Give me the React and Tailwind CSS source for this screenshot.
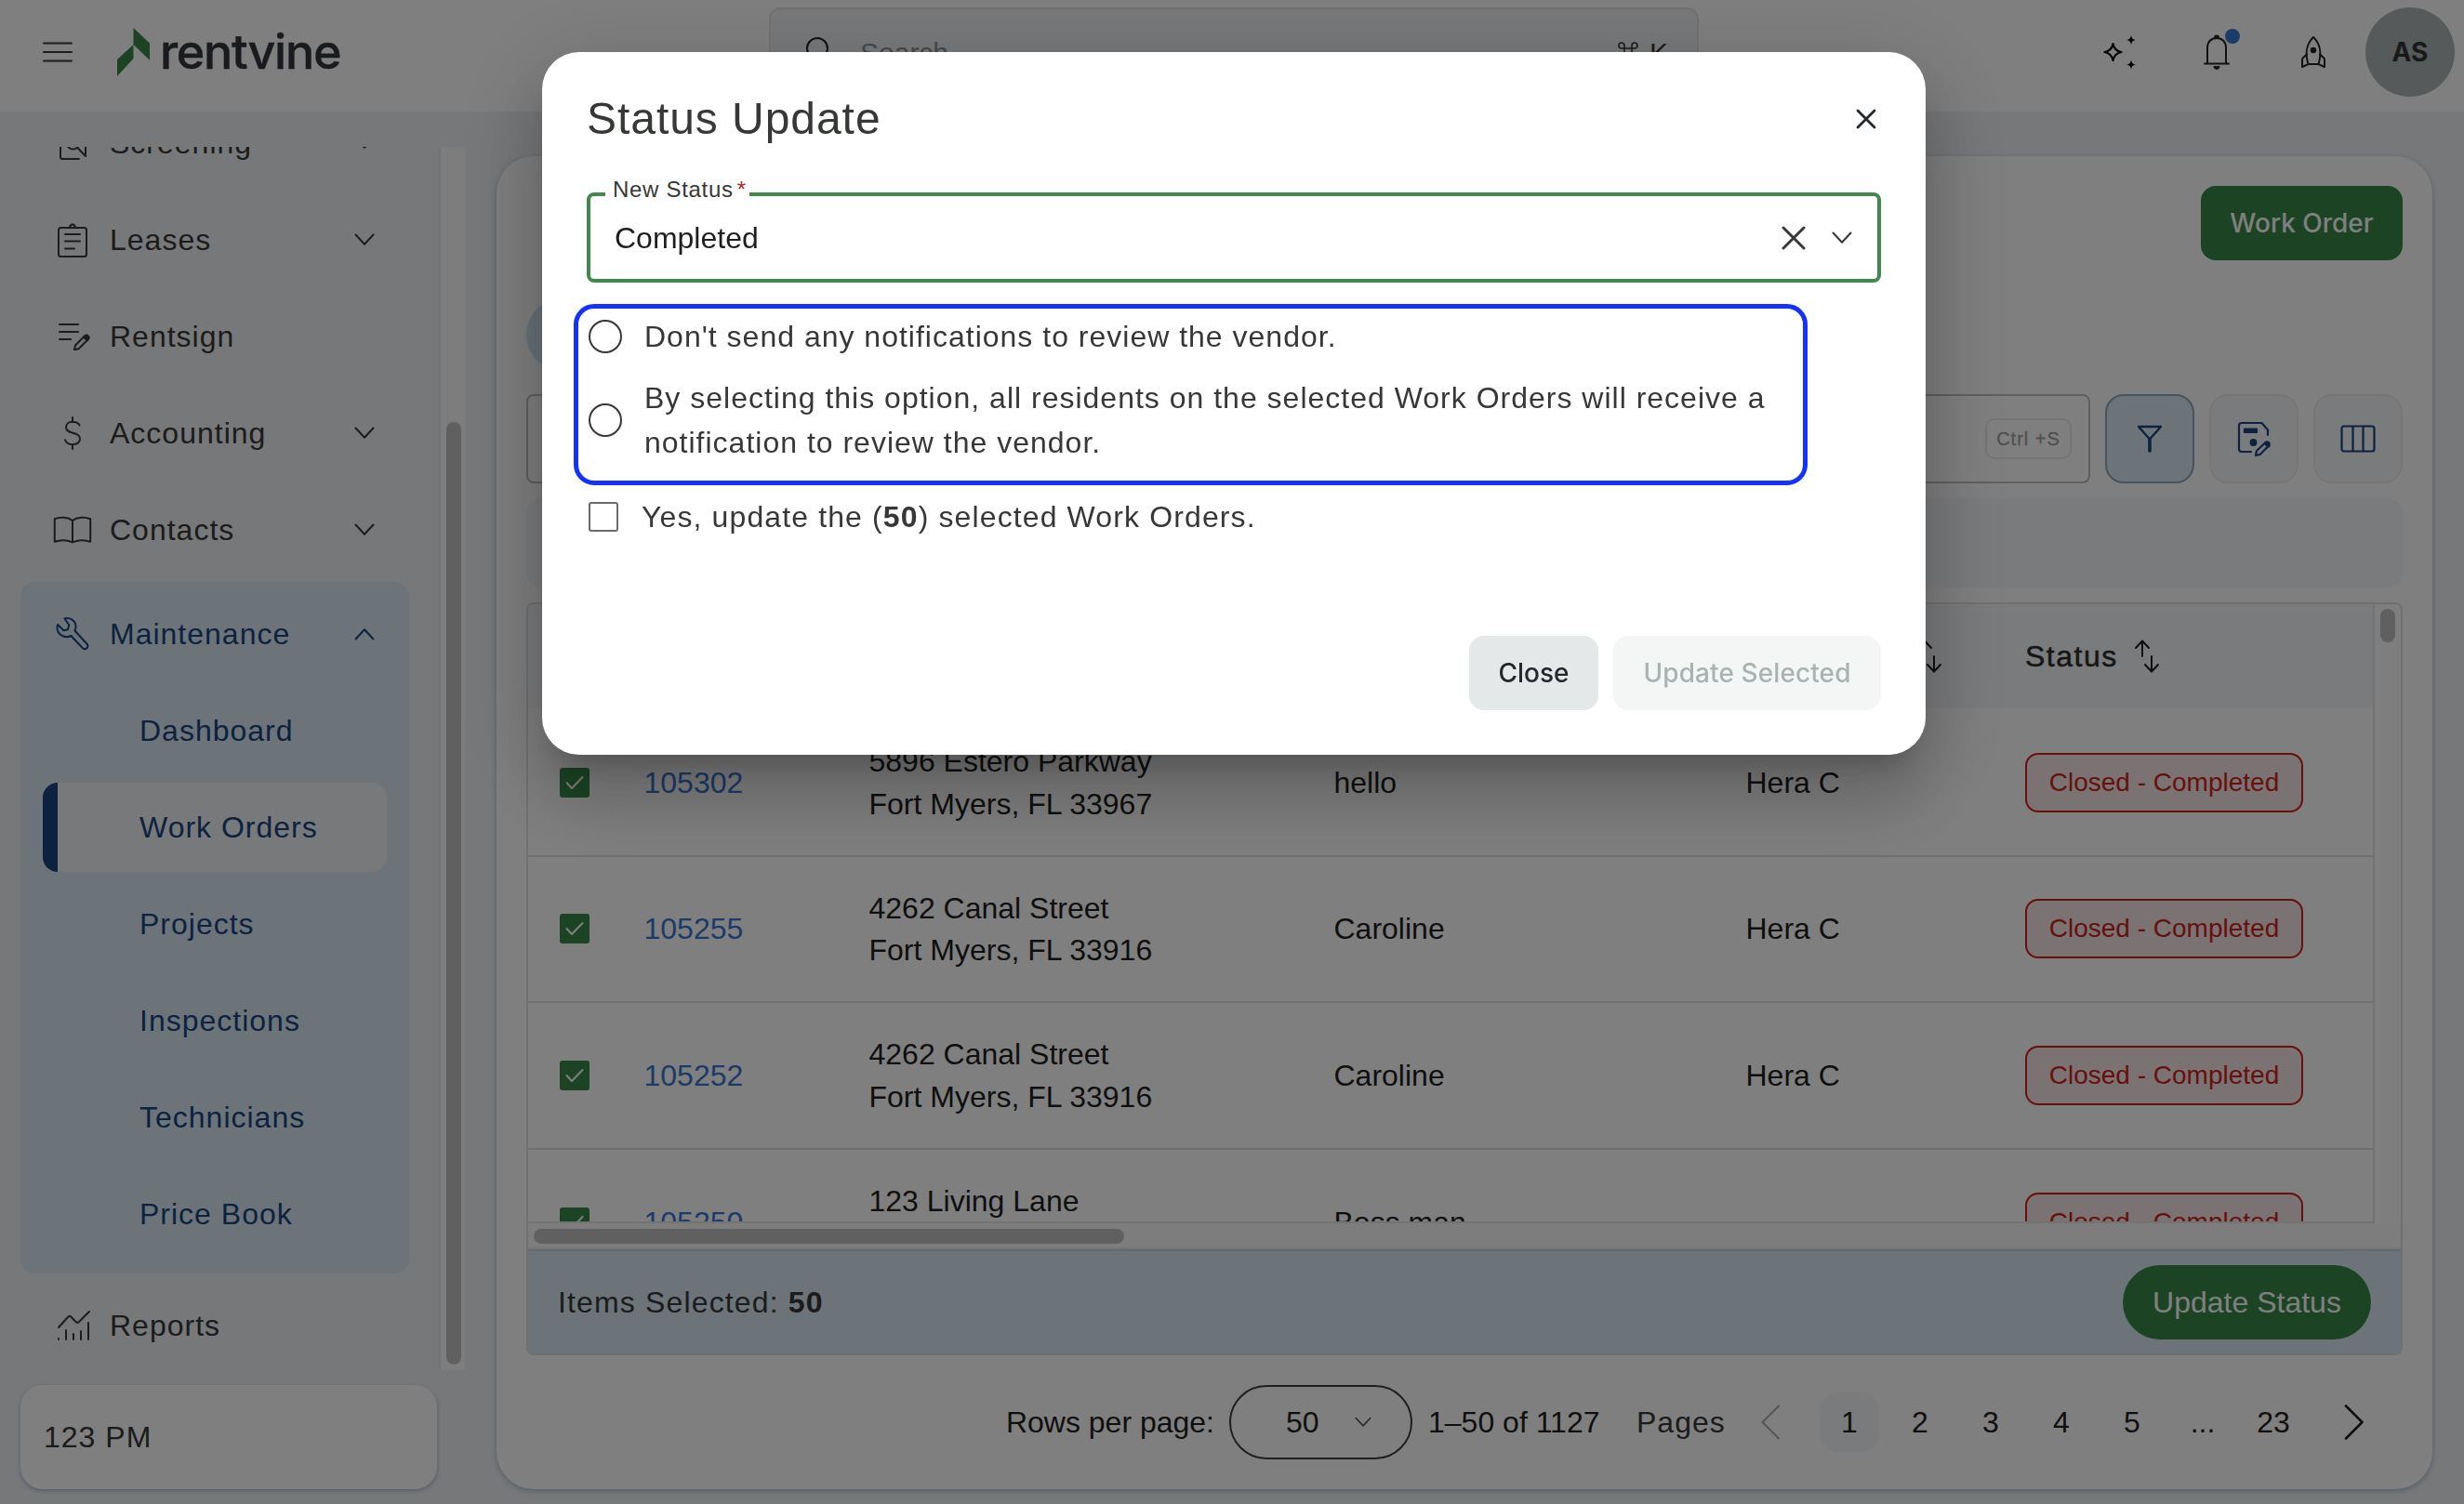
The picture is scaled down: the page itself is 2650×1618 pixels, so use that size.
import clsx from 'clsx';

const Svg = ({ w, h, sw = 2, className, children }) => (
  <svg
    width={w}
    height={h}
    viewBox={`0 0 ${w} ${h}`}
    fill="none"
    stroke="currentColor"
    strokeWidth={sw}
    strokeLinecap="round"
    strokeLinejoin="round"
    className={clsx('shrink-0', className)}
  >
    {children}
  </svg>
);

const ChevronDown = ({ className }) => (
  <Svg w={22} h={14} className={className}>
    <path d="M1.500 1.500 11 11.800l9.500-10.300" />
  </Svg>
);

const ScreeningIcon = () => (
  <Svg w={34} h={36}>
    <path d="M24 35H6.500A2.500 2.500 0 0 1 4 32.500v-27A2.500 2.500 0 0 1 6.500 3h22A2.500 2.500 0 0 1 31 5.500V32l-8.500-9" />
    <circle cx="17.500" cy="18" r="6.500" />
  </Svg>
);

const LeasesIcon = () => (
  <Svg w={34} h={38}>
    <rect x="2" y="6" width="30" height="31" rx="2.500" />
    <path d="M14 6a3 3.600 0 1 1 6 0M9 13h16M9 20.500h16M9 28.500h10" />
  </Svg>
);

const RentsignIcon = () => (
  <Svg w={36} h={32}>
    <path d="M3 3h20M3 11h20M3 19h12" />
    <path d="M20 25.500 30 15.500a2.600 2.600 0 0 1 3.700 3.700L23.500 29.200 19 30.300z" />
    <path d="m29 16.500 3.600 3.600 1.400-2-2.400-2.800z" fill="currentColor" />
  </Svg>
);

const AccountingIcon = () => (
  <Svg w={20} h={36} className="ml-[7px]">
    <path d="M10 1v5M10 30v5M17.500 9.500C16 7 13.500 5.800 10 5.800 6 5.800 3 8.200 3 11.800c0 8 15 4 15 12.300 0 3.800-3.200 6.100-8 6.100-4.100 0-7-1.900-8-4.900" />
  </Svg>
);

const ContactsIcon = () => (
  <Svg w={42} h={30} className="-ml-1">
    <path d="M21 5C16 1 8 .8 1.800 3.200v24.500C8 25.500 16 25.500 21 28.500c5-3 13-3 19.200-.8V3.200C34 .8 26 1 21 5zM21 5v23.500" />
  </Svg>
);

const MaintenanceIcon = () => (
  <Svg w={36} h={36} className="-ml-px">
    <path d="M9.500 1.500c5.500-1.700 11.700 2 12 8 .1 2-.4 3.600-1 5l13 14.200c2.600 3.300-1.400 7.300-4.600 4.600L16.500 20c-7 3.500-14.800-1.500-15-8.500 0-1.500.2-2.500.7-3.500l6.300 6.300 4.500-1 1.300-4.800z" />
  </Svg>
);

const ReportsIcon = () => (
  <Svg w={36} h={34}>
    <path d="M2 19 12.500 7.500a2 2 0 0 1 2.800 0l5.500 5.800a2 2 0 0 0 2.900 0L35 2" />
    <path d="M2 31v1M10 22v10M18 26v6M26 23v9M34 14v18" />
  </Svg>
);

const NAV_TOP = [
  { label: 'Screening', icon: ScreeningIcon, expandable: true },
  { label: 'Leases', icon: LeasesIcon, expandable: true },
  { label: 'Rentsign', icon: RentsignIcon },
  { label: 'Accounting', icon: AccountingIcon, expandable: true },
  { label: 'Contacts', icon: ContactsIcon, expandable: true },
];

const MAINTENANCE_LINKS = ['Dashboard', 'Work Orders', 'Projects', 'Inspections', 'Technicians', 'Price Book'];

const ROWS = [
  { id: '105302', street: '5896 Estero Parkway', city: 'Fort Myers, FL 33967', description: 'hello', tech: 'Hera C' },
  { id: '105255', street: '4262 Canal Street', city: 'Fort Myers, FL 33916', description: 'Caroline', tech: 'Hera C' },
  { id: '105252', street: '4262 Canal Street', city: 'Fort Myers, FL 33916', description: 'Caroline', tech: 'Hera C' },
  { id: '105250', street: '123 Living Lane', city: '\u00a0', description: 'Boss man', tech: '' },
];

const NavRow = ({ label, icon: Icon, expandable }) => (
  <div className="flex h-[104px] shrink-0 items-center pl-[61px]">
    <div className="flex w-[57px] items-center">
      <Icon />
    </div>
    <span className="flex-1">{label}</span>
    {expandable && <ChevronDown className="mr-[69px]" />}
  </div>
);

const Header = () => (
  <header className="flex h-[120px] items-center bg-white pb-2">
    <Svg w={32} h={24} className="ml-[46px] text-[#363836]">
      <path d="M1 2.500h30M1 12h30M1 21.500h30" />
    </Svg>
    <svg width="36" height="54" viewBox="0 0 36 54" className="ml-[47px] mt-[-1px] shrink-0" fill="#388848">
      <path d="M18.500 1 36 17.500v18.200L18.500 19zM18.500 19v15L1 53V35z" />
    </svg>
    <span className="ml-[11px] w-[655px] font-['Inter'] text-[52px] font-medium leading-none tracking-[-1.300px] text-[#33363c] [-webkit-text-stroke:0.4px_#33363c]">
      rentvine
    </span>
    <div className="flex h-24 w-[1000px] shrink-0 items-center rounded-xl border-2 border-[#e4e5e7] bg-[#f0f2f6] pl-[37px] pr-[31px] text-[32px]">
      <Svg w={32} h={32} className="text-[#222]">
        <circle cx="13" cy="12" r="11" />
        <path d="m21 20 8 9" />
      </Svg>
      <span className="ml-[27px] flex-1 text-[30px] text-[#8f9193]">Search</span>
      <Svg w={22} h={22} sw={1.6} className="mr-[12px] text-[#363836]">
        <path d="M7 7h8v8H7zM7 7H4a3 3 0 1 1 3-3zM15 7V4a3 3 0 1 1 3 3zM15 15h3a3 3 0 1 1-3 3zM7 15v3a3 3 0 1 1-3-3z" />
      </Svg>
      <span className="text-[30px] text-[#363836]">K</span>
    </div>
    <div className="flex flex-1 items-center justify-end pr-[10px]">
      <Svg w={38} h={40} sw={2.2} className="mr-[71px] text-black">
        <path d="M12.500 11c1 5.500 3.500 8 9 9-5.500 1-8 3.500-9 9-1-5.500-3.500-8-9-9 5.500-1 8-3.500 9-9z" />
        <path
          stroke="none"
          fill="currentColor"
          d="M32 2c.9 3.600 1.600 4.300 5 5-3.400.8-4.100 1.500-5 5-.9-3.500-1.600-4.200-5-5 3.400-.7 4.100-1.400 5-5zM32 28.500c.9 3.600 1.600 4.300 5 5-3.400.8-4.100 1.500-5 5-.9-3.500-1.600-4.200-5-5 3.400-.7 4.100-1.400 5-5z"
        />
      </Svg>
      <div className="relative mr-[75px] text-[#222]">
        <Svg w={30} h={38}>
          <path d="M5 31.500V14.500C5 8 9 4 15 4s10 4 10 10.500v17M2 31.500h26" />
          <path d="M13 3.500a2 2 0 0 1 4 0zM12.500 35h5c-.8 2.500-4.200 2.500-5 0z" fill="currentColor" />
        </Svg>
        <span className="absolute -right-[10px] -top-[6px] h-4 w-4 rounded-full bg-[#3876d0]" />
      </div>
      <Svg w={28} h={36} className="mr-[42px] text-[#222]">
        <path d="M8.500 31C5 20 6.500 9 14 2c7.500 7 9 18 5.500 29z" />
        <path d="M7 20.500 3 24c-1 .8-1 1.500-1 2.500V34l6.500-2.800M21 20.500l4 3.500c1 .8 1 1.500 1 2.500V34l-6.500-2.800" />
        <circle cx="14" cy="16" r="2.200" fill="currentColor" />
      </Svg>
      <div className="flex h-24 w-24 items-center justify-center rounded-full bg-[#acb4b6] font-['Inter'] text-[28px] font-bold text-[#333]">
        AS
      </div>
    </div>
  </header>
);

const Sidebar = () => (
  <aside className="w-[500px] shrink-0 pt-[38px] text-[32px] tracking-[1px] text-[#363836]">
    <div className="flex h-[1316px] overflow-hidden">
      <nav className="-mt-[56px] flex w-[472px] flex-col">
        {NAV_TOP.map((item) => (
          <NavRow key={item.label} {...item} />
        ))}

        <div className="my-1 ml-[22px] w-[418px] shrink-0 rounded-2xl bg-[#d8e8f4] pb-3 pt-1 text-[#1a4480]">
          <div className="flex h-[104px] items-center pl-[39px] pr-[37px]">
            <div className="w-[57px]">
              <MaintenanceIcon />
            </div>
            <span className="flex-1">Maintenance</span>
            <ChevronDown className="rotate-180" />
          </div>
          {MAINTENANCE_LINKS.map((label) => (
            <div key={label} className="flex h-[104px] items-center px-6">
              <div
                className={clsx(
                  'flex h-24 w-full items-center overflow-hidden rounded-2xl',
                  label === 'Work Orders' && 'bg-[#eef2f6]'
                )}
              >
                <span className={clsx('h-full w-4', label === 'Work Orders' && 'bg-[#1a4480]')} />
                <span className="pl-[88px]">{label}</span>
              </div>
            </div>
          ))}
        </div>

        <NavRow label="Reports" icon={ReportsIcon} />
      </nav>
      <div className="flex w-[28px] justify-center border-l-2 border-[#e8e8e8] bg-[#fafafa] pl-[2px] pt-[296px]">
        <div className="h-[1014px] w-4 rounded-full bg-[#c1c1c1]" />
      </div>
    </div>
    <div className="ml-[22px] mt-4 flex h-28 w-[448px] items-center rounded-3xl bg-white pl-[25px] shadow-[0_2px_5px_#a9bccf]">
      123 PM
    </div>
  </aside>
);

const SortIcon = () => (
  <Svg w={28} h={36} className="text-[#1e1e1e]">
    <path d="M9 18V2M2 9l7-7.500L16 9M19 18v16M12 27l7 7.500 7-7.500" />
  </Svg>
);

const Check = () => (
  <span className="flex h-8 w-8 items-center justify-center rounded-[3px] bg-[#388848] text-white">
    <Svg w={20} h={16}>
      <path d="m1.500 8 5.500 6L18.500 2" />
    </Svg>
  </span>
);

const GRID = 'grid grid-cols-[90.500px_242px_500px_443px_300.500px_1fr] items-center pl-[34px]';

const WorkOrdersTable = () => (
  <div className="mt-4 flex h-[810px] flex-col overflow-hidden rounded-lg border-2 border-[#e0e0e0] text-[32px] text-[#1e1e1e]">
    <div className="flex h-[666px] shrink-0">
      <div className="w-[1986px] overflow-hidden border-b-2 border-r-2 border-[#e6e6e6]">
        <div className={clsx(GRID, 'mb-[2px] h-28 bg-[#f5f7fb]')}>
          <span />
          <span />
          <span />
          <span />
          <span className="flex w-[211px] justify-end">
            <SortIcon />
          </span>
          <span className="flex items-center gap-[17px] tracking-[1.500px] text-[#2c2c2c] [-webkit-text-stroke:0.5px_#2c2c2c]">
            Status
            <SortIcon />
          </span>
        </div>
        {ROWS.map((row) => (
          <div key={row.id} className={clsx(GRID, 'h-[157.600px] border-b-2 border-[#e0e0e0]')}>
            <Check />
            <span className="text-[#3876d0]">{row.id}</span>
            <span className="pt-[2px] leading-[45.500px]">
              {row.street}
              <br />
              {row.city}
            </span>
            <span>{row.description}</span>
            <span>{row.tech}</span>
            <span className="flex h-16 w-[299px] items-center justify-center rounded-[14px] border-2 border-[#cf2318] bg-[#f6e6e6] text-[28px] text-[#cf2318]">
              Closed - Completed
            </span>
          </div>
        ))}
      </div>
      <div className="flex flex-1 justify-center bg-[#fdfdfd] pt-[5px]">
        <div className="h-9 w-4 rounded-full bg-[#c1c1c1]" />
      </div>
    </div>
    <div className="h-7 shrink-0 border-b-2 border-[#ebebeb] bg-[#fafafa] pl-[6px] pt-[6px]">
      <div className="h-4 w-[635px] rounded-full bg-[#c1c1c1]" />
    </div>
    <div className="flex flex-1 items-center justify-between border-t-2 border-[#c2d4e2] bg-[#d8e8f4] pl-8 pr-8">
      <span className="tracking-[1.150px] text-[#363836]">
        Items Selected: <b>50</b>
      </span>
      <span className="flex h-20 w-[267px] items-center justify-center rounded-full bg-[#388848] text-white">
        Update Status
      </span>
    </div>
  </div>
);

const Pagination = () => (
  <div className="mt-8 flex h-20 items-center justify-end pr-[41px] text-[32px] text-[#1e1e1e]">
    <span>Rows per page:</span>
    <span className="ml-4 flex h-20 w-[197px] items-center justify-between rounded-full border-2 border-[#3e3e3e] pl-[59px] pr-[42px]">
      50
      <ChevronDown className="w-[18px] text-[#555]" />
    </span>
    <span className="ml-[17px] w-[224px]">1–50 of 1127</span>
    <span className="w-[133px] tracking-[1px] text-[#363836]">Pages</span>
    <Svg w={22} h={38} className="mr-[42px] text-[#aaa]">
      <path d="M20 1.500 2.500 19 20 36.500" />
    </Svg>
    <div className="flex gap-3">
      {['1', '2', '3', '4', '5', '...', '23'].map((page) => (
        <span
          key={page}
          className={clsx('flex h-16 w-16 items-center justify-center rounded-[20px]', page === '1' && 'bg-[#f5f7fb]')}
        >
          {page}
        </span>
      ))}
    </div>
    <Svg w={22} h={38} sw={2.6} className="ml-[44px]">
      <path d="M2 1.500 19.500 19 2 36.500" />
    </Svg>
  </div>
);

const TOOL_BUTTON = 'flex h-24 w-24 shrink-0 items-center justify-center rounded-[20px] border-2 text-[#1a4480]';

const WorkOrdersPanel = () => (
  <main className="ml-[34px] mt-12 h-[1434px] w-[2082px] rounded-[40px] bg-white px-8 pt-8 shadow-[0_2px_6px_#a9bccf]">
    <div className="flex justify-end">
      <span className="flex h-20 w-[217px] items-center justify-center rounded-2xl bg-[#388848] font-['Inter'] text-[28px] font-medium text-white">
        Work Order
      </span>
    </div>
    <div className="mt-10 h-20 w-[240px] rounded-full bg-[#cfe4f4]" />
    <div className="mt-6 flex gap-4">
      <div className="flex h-24 flex-1 items-center justify-end rounded-lg border-2 border-[#bebebe] pr-[18px]">
        <span className="flex h-11 w-[93px] items-center justify-center rounded-[10px] border-2 border-[#e8e8e8] text-[20px] tracking-[1px] text-[#a0a0a0] [-webkit-text-stroke:0.3px_#a0a0a0]">
          Ctrl +S
        </span>
      </div>
      <div className={clsx(TOOL_BUTTON, 'border-[#8aa8be] bg-[#d8e8f4]')}>
        <Svg w={28} h={30} sw={2.4}>
          <path d="M2 2h24l-12 13.500z" />
          <path d="M14 15.500V28" strokeWidth="3.600" />
        </Svg>
      </div>
      <div className={clsx(TOOL_BUTTON, 'border-[#ececec] bg-[#f5f7fb]')}>
        <Svg w={36} h={38} sw={2.2}>
          <path d="M33 15v-5.500L26.500 2H5a3 3 0 0 0-3 3v25a3 3 0 0 0 3 3h10" />
          <rect x="8" y="8.500" width="13" height="3.500" fill="currentColor" />
          <circle cx="17.500" cy="23" r="2.800" fill="currentColor" />
          <path d="M21 32 30.500 23a2.400 2.400 0 0 1 3.500 3.400L24.500 36l-4.500.8z" />
          <path d="m31 24 2.500 2.500" strokeWidth="4" />
        </Svg>
      </div>
      <div className={clsx(TOOL_BUTTON, 'border-[#ececec] bg-[#f5f7fb]')}>
        <Svg w={38} h={30} sw={2.2}>
          <rect x="1.500" y="1.500" width="35" height="27" rx="2.500" />
          <path d="M13.500 2v26M24.500 2v26" />
        </Svg>
      </div>
    </div>
    <div className="mt-4 h-24 rounded-2xl bg-[#f5f7fb]" />
    <WorkOrdersTable />
    <Pagination />
  </main>
);

const Radio = () => <span className="h-9 w-9 shrink-0 rounded-full border-2 border-[#363836]" />;

const StatusUpdateDialog = () => (
  <div className="fixed inset-0 bg-black/50">
    <div className="ml-[583px] mt-14 h-[756px] w-[1488px] rounded-[40px] bg-white px-12 pt-9 text-[32px] tracking-[1px] text-[#363836] shadow-[0_22px_30px_-14px_rgba(0,0,0,0.2),0_48px_76px_6px_rgba(0,0,0,0.14),0_18px_92px_16px_rgba(0,0,0,0.12)]">
      <div className="flex h-[72px] items-center justify-between pr-[5px]">
        <h2 className="text-[48px] tracking-[0.950px]">Status Update</h2>
        <Svg w={22} h={22} sw={2.8} className="text-[#25282b]">
          <path d="m2 2 18 18M20 2 2 20" />
        </Svg>
      </div>

      <div className="relative mt-[43px] flex h-[97px] w-[1392px] items-center rounded-lg border-4 border-[#3f8a4b] pl-[26px] pr-[27px] tracking-normal text-[#1e1e1e]">
        <span className="absolute -top-[24px] left-[16px] flex h-[34px] w-[155px] items-center bg-white pl-2 text-[24px] tracking-[0.700px] text-[#363836]">
          New Status
          <span className="pl-[4px] text-[#b3261e]">*</span>
        </span>
        <span className="flex-1">Completed</span>
        <Svg w={26} h={26} sw={3} className="mr-[28px] text-[#363836]">
          <path d="m2 2 22 22M24 2 2 24" />
        </Svg>
        <ChevronDown className="text-[#363836]" />
      </div>

      <div className="-ml-[14px] mt-[23px] h-[195px] w-[1327px] rounded-[22px] border-[5px] border-[#1433fa] pl-[11px] pt-[6px]">
        <div className="flex h-12 items-center gap-[24px]">
          <Radio />
          Don't send any notifications to review the vendor.
        </div>
        <div className="mt-[18px] flex items-center gap-[24px] leading-[48px]">
          <Radio />
          <span>
            By selecting this option, all residents on the selected Work Orders will receive a
            <br />
            notification to review the vendor.
          </span>
        </div>
      </div>

      <div className="ml-[2px] mt-[10px] flex h-12 items-center gap-[25px] tracking-[1.120px]">
        <span className="h-8 w-8 rounded-[3px] border-2 border-[#6b6b6b]" />
        <span>
          Yes, update the (<b>50</b>) selected Work Orders.
        </span>
      </div>

      <div className="mt-[104px] flex justify-end gap-4 font-['Inter'] text-[28px] font-medium tracking-normal">
        <span className="flex h-20 w-[139px] items-center justify-center rounded-2xl bg-[#e4e8e8] text-[#25282b]">
          Close
        </span>
        <span className="flex h-20 w-[288px] items-center justify-center rounded-2xl bg-[#f4f6f6] tracking-[0.100px] text-[#a9b3b3]">
          Update Selected
        </span>
      </div>
    </div>
  </div>
);

const App = () => (
  <div className="h-[1618px] w-full overflow-hidden bg-[#eef0f4] font-['Liberation_Sans',Arial,sans-serif]">
    <Header />
    <div className="flex">
      <Sidebar />
      <WorkOrdersPanel />
    </div>
    <StatusUpdateDialog />
  </div>
);

export default App;
